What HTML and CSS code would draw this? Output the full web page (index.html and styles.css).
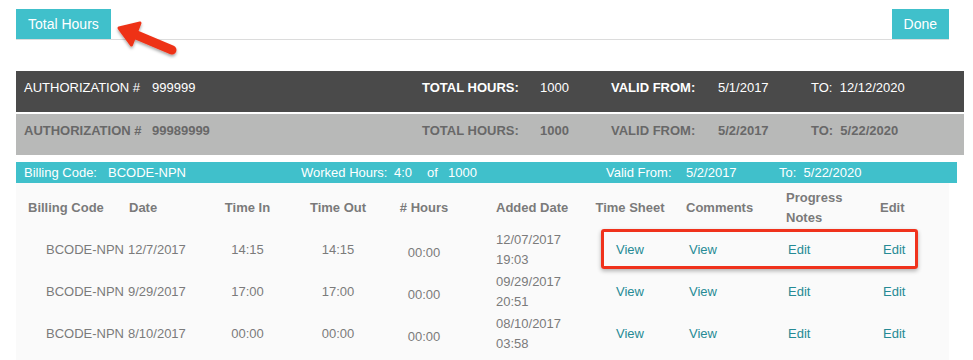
FILE: index.html
```html
<!DOCTYPE html>
<html lang="en">
<head>
    <meta charset="UTF-8">
    <title>Total Hours</title>
    <link rel="stylesheet" href="styles.css">
</head>
<body>
    <section class="page">
        <div class="topbar">
            <a href="javascript:;" class="btn">Total Hours</a>
            <a href="javascript:;" class="btn">Done</a>
        </div>

        <!-- authorizations -->
        <div class="auth auth-active">
            <span>AUTHORIZATION #</span><span>999999</span>
            <b>TOTAL HOURS:</b><span>1000</span>
            <b>VALID FROM:</b><span>5/1/2017</span>
            <span>TO:&nbsp; 12/12/2020</span>
        </div>
        <div class="auth auth-old">
            <span>AUTHORIZATION #</span><span>99989999</span>
            <span>TOTAL HOURS:</span><span>1000</span>
            <span>VALID FROM:</span><span>5/2/2017</span>
            <span>TO:&nbsp; 5/22/2020</span>
        </div>

        <div class="billing">
            <span>Billing Code:</span><span>BCODE-NPN</span>
            <span>Worked Hours:</span><span>4:0</span><span>of</span><span>1000</span>
            <span>Valid From:</span><span>5/2/2017</span>
            <span>To:&nbsp; 5/22/2020</span>
        </div>

        <div class="hours">
            <div class="th c1">Billing Code</div>
            <div class="th c2">Date</div>
            <div class="th c3">Time In</div>
            <div class="th c4">Time Out</div>
            <div class="th c5"># Hours</div>
            <div class="th c6">Added Date</div>
            <div class="th c7">Time Sheet</div>
            <div class="th c8">Comments</div>
            <div class="th c9">Progress<br>Notes</div>
            <div class="th c10">Edit</div>

            <div class="td c1">BCODE-NPN</div>
            <div class="td c2">12/7/2017</div>
            <div class="td c3">14:15</div>
            <div class="td c4">14:15</div>
            <div class="td c5">00:00</div>
            <div class="td c6">12/07/2017<br>19:03</div>
            <div class="td c7"><a href="javascript:;">View</a></div>
            <div class="td c8"><a href="javascript:;">View</a></div>
            <div class="td c9"><a href="javascript:;">Edit</a></div>
            <div class="td c10"><a href="javascript:;">Edit</a></div>

            <div class="td c1">BCODE-NPN</div>
            <div class="td c2">9/29/2017</div>
            <div class="td c3">17:00</div>
            <div class="td c4">17:00</div>
            <div class="td c5">00:00</div>
            <div class="td c6">09/29/2017<br>20:51</div>
            <div class="td c7"><a href="javascript:;">View</a></div>
            <div class="td c8"><a href="javascript:;">View</a></div>
            <div class="td c9"><a href="javascript:;">Edit</a></div>
            <div class="td c10"><a href="javascript:;">Edit</a></div>

            <div class="td c1">BCODE-NPN</div>
            <div class="td c2">8/10/2017</div>
            <div class="td c3">00:00</div>
            <div class="td c4">00:00</div>
            <div class="td c5">00:00</div>
            <div class="td c6">08/10/2017<br>03:58</div>
            <div class="td c7"><a href="javascript:;">View</a></div>
            <div class="td c8"><a href="javascript:;">View</a></div>
            <div class="td c9"><a href="javascript:;">Edit</a></div>
            <div class="td c10"><a href="javascript:;">Edit</a></div>
        </div>

        <!-- annotations -->
        <svg class="arrow" width="80" height="50" viewBox="100 10 80 50">
            <defs>
                <filter id="sh" x="-30%" y="-30%" width="160%" height="160%">
                    <feDropShadow dx="0" dy="2" stdDeviation="1.5" flood-color="#000" flood-opacity=".35"/>
                </filter>
            </defs>
            <g filter="url(#sh)" fill="#ee3319" stroke="#ee3319">
                <line x1="172" y1="50" x2="134" y2="34" stroke-width="9" stroke-linecap="round"/>
                <polygon points="119,28 140,23 131.5,45" stroke-width="3" stroke-linejoin="round"/>
            </g>
        </svg>
        <div class="mark"></div>
    </section>
</body>
</html>
```

FILE: styles.css
```css
html,body{ height:100%; }
body{ margin:0; font-family:"Liberation Sans", Arial, sans-serif; background:#fff; }
a{ text-decoration:none; }

.page{ position:relative; padding:9px 0 0 16px; }

.topbar{
    width:933px;
    display:flex;
    justify-content:space-between;
    border-bottom:1px solid #dcdcdc;
}
.topbar .btn{
    display:block;
    height:30px;
    line-height:30px;
    padding:0 12px;
    background:#40c0cb;
    color:#fff;
    font-size:14px;
}

.auth{
    width:948px;
    height:41px;
    box-sizing:border-box;
    padding:9px 0 0 8px;
    display:grid;
    grid-template-columns:128px 270px 118px 71px 107px 93px auto;
    align-items:start;
    font-size:13px;
    line-height:16px;
}
.auth b{ font-weight:bold; }
.auth-active{ margin-top:31px; background:#4a4a4a; color:#fff; }
.auth-old{ margin-top:2px; background:#b8b9b8; color:#686868; font-weight:bold; }

.billing{
    margin-top:7px;
    width:941px;
    height:21px;
    box-sizing:border-box;
    padding-left:8px;
    display:grid;
    grid-template-columns:84px 193px 93px 33px 21px 158px 80px 93px auto;
    align-items:center;
    background:#40c0cb;
    color:#fff;
    font-size:13px;
}

.hours{
    width:933px;
    background:#fafafa;
    display:grid;
    grid-template-columns:112px 77px 85px 96px 76px 128px 80px 100px 90px 89px;
    grid-template-rows:46px repeat(3, 42px) 20px;
    align-items:center;
    font-size:13px;
    line-height:20px;
    color:#7b7b7b;
}
.hours .th{ font-weight:bold; color:#7a7a7a; padding-top:4px; }
.hours .td a{ color:#268a95; }

.th.c1{ padding-left:12px; }
.td.c1{ text-align:right; padding-right:4px; }
.th.c2{ padding-left:1px; }
.c3,.c4,.c5,.c7{ text-align:center; }
.td.c5{ padding-top:5px; }
.c6{ padding-left:34px; }
.th.c8{ padding-left:16px; }
.td.c8{ padding-left:19px; }
.th.c9{ padding-left:16px; }
.td.c9{ padding-left:18px; }
.th.c10{ padding-left:20px; }
.td.c10{ padding-left:23px; }

.arrow{ position:absolute; left:100px; top:10px; }
.mark{
    position:absolute;
    left:601px;
    top:229px;
    width:311px;
    height:34px;
    border:3px solid #f0321c;
    border-radius:3px;
    box-shadow:0 2px 4px rgba(0,0,0,.3);
}
```
